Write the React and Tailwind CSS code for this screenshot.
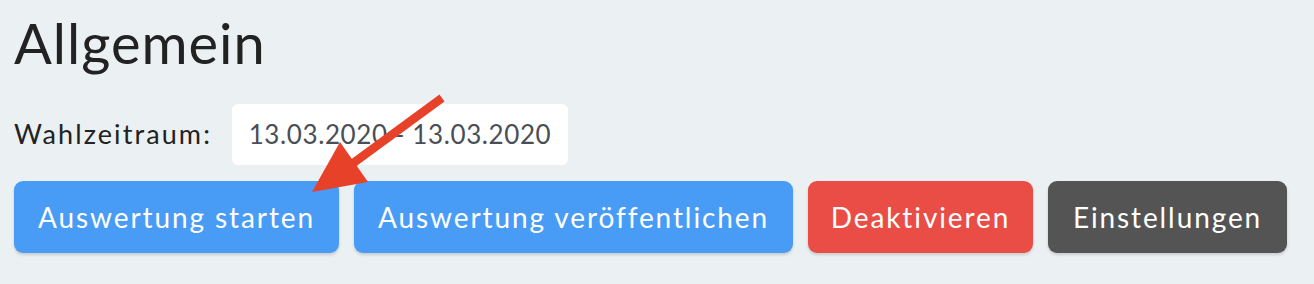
import React from 'react';

const buttons = [
  { label: 'Auswertung starten', className: 'w-[325px] bg-[#489cf5]' },
  { label: 'Auswertung veröffentlichen', className: 'w-[439px] bg-[#489cf5]' },
  { label: 'Deaktivieren', className: 'w-[225px] bg-[#ea4d45]' },
  { label: 'Einstellungen', className: 'w-[239px] bg-[#545454]' },
];

export default function App() {
  return (
    <div className="relative h-[284px] w-[1314px] overflow-hidden bg-[#ebf0f3] px-[14px] pt-[11px] font-['Lato',sans-serif] text-[#222]">
      <h1 className="text-[56px] leading-[64px] font-normal tracking-[1px]">Allgemein</h1>

      <div className="mt-[29px] flex items-center">
        <span className="w-[218px] text-[27px] tracking-[2.1px]">Wahlzeitraum:</span>
        <div className="flex h-[61px] w-[336px] items-center justify-center rounded-[6px] bg-white text-[26px] tracking-[0.6px] text-[#4a4e55]">
          13.03.2020 - 13.03.2020
        </div>
      </div>

      <div className="mt-[16px] flex gap-[15px]">
        {buttons.map((b) => (
          <button
            key={b.label}
            type="button"
            className={`h-[72px] rounded-[9px] text-[28px] tracking-[1.9px] text-white shadow-[0_2px_3px_rgba(0,0,0,0.15)] ${b.className}`}
          >
            {b.label}
          </button>
        ))}
      </div>

      {/* annotation arrow */}
      <svg className="pointer-events-none absolute left-0 top-0" width="1314" height="284" viewBox="0 0 1314 284">
        <line x1="442" y1="98" x2="352" y2="164" stroke="#e8412a" strokeWidth="8.5" />
        <polygon points="340,142 368,182 312,192" fill="#e8412a" />
      </svg>
    </div>
  );
}
